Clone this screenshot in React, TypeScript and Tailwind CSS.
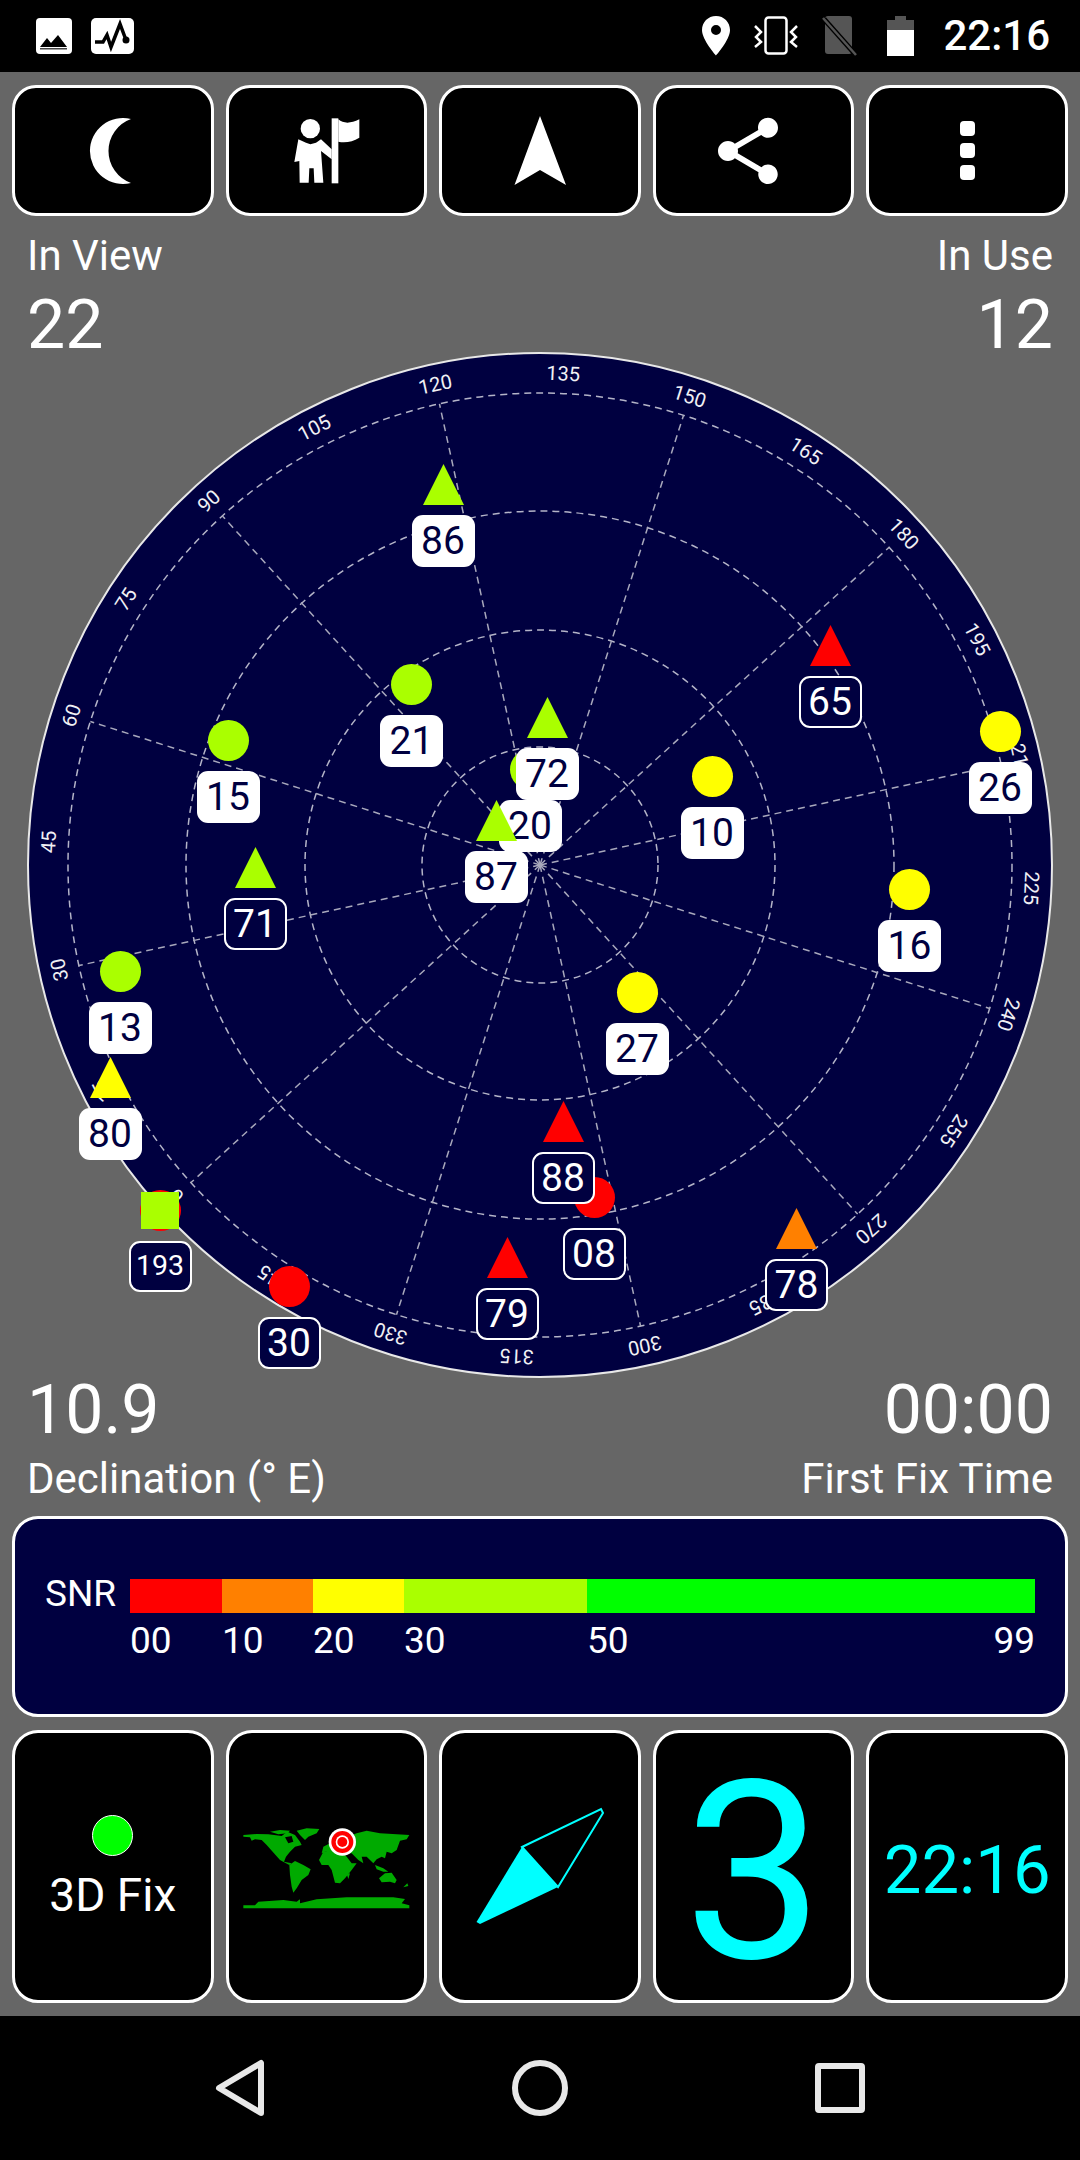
import { MdShare } from 'react-icons/md'

const RED = '#ff0000'
const ORANGE = '#ff8000'
const YELLOW = '#ffff00'
const LIME = '#aaff00'

type Sat = {
  id: string
  x: number
  y: number
  color: string
  shape: 'circle' | 'triangle' | 'square'
  inUse?: boolean
}

// x = marker centre, y = marker top, page coordinates
const sats: Sat[] = [
  { id: '86', x: 443, y: 464, color: LIME, shape: 'triangle', inUse: true },
  { id: '21', x: 411.5, y: 664, color: LIME, shape: 'circle', inUse: true },
  { id: '15', x: 228, y: 720, color: LIME, shape: 'circle', inUse: true },
  { id: '71', x: 255, y: 847, color: LIME, shape: 'triangle' },
  { id: '20', x: 530, y: 749, color: LIME, shape: 'circle', inUse: true },
  { id: '72', x: 547, y: 697, color: LIME, shape: 'triangle', inUse: true },
  { id: '87', x: 496, y: 800, color: LIME, shape: 'triangle', inUse: true },
  { id: '65', x: 830, y: 625, color: RED, shape: 'triangle' },
  { id: '26', x: 1000, y: 711, color: YELLOW, shape: 'circle', inUse: true },
  { id: '10', x: 712, y: 756, color: YELLOW, shape: 'circle', inUse: true },
  { id: '16', x: 909.5, y: 869, color: YELLOW, shape: 'circle', inUse: true },
  { id: '27', x: 637, y: 972, color: YELLOW, shape: 'circle', inUse: true },
  { id: '13', x: 120, y: 951, color: LIME, shape: 'circle', inUse: true },
  { id: '80', x: 110, y: 1057, color: YELLOW, shape: 'triangle', inUse: true },
  { id: '193', x: 160, y: 1190, color: RED, shape: 'square' },
  { id: '30', x: 289, y: 1266, color: RED, shape: 'circle' },
  { id: '79', x: 507, y: 1237, color: RED, shape: 'triangle' },
  { id: '08', x: 594, y: 1177, color: RED, shape: 'circle' },
  { id: '88', x: 563, y: 1101, color: RED, shape: 'triangle' },
  { id: '78', x: 796.5, y: 1208, color: ORANGE, shape: 'triangle' },
]

const DIAL_LEFT = 26
const DIAL_TOP = 351
const C = 514
const ROT = -132.3

function Marker({ sat }: { sat: Sat }) {
  if (sat.shape === 'triangle') {
    return (
      <svg width="41" height="41" viewBox="0 0 41 41">
        <polygon points="20.5,0 41,41 0,41" fill={sat.color} />
      </svg>
    )
  }
  if (sat.shape === 'square') {
    return (
      <div className="relative w-[41px] h-[41px] rounded-full bg-[#ff0000]">
        <div className="absolute left-[1.5px] top-[2px] w-[38px] h-[37px] bg-[#aaff00]" />
      </div>
    )
  }
  return <div className="w-[41px] h-[41px] rounded-full" style={{ background: sat.color }} />
}

function Satellite({ sat }: { sat: Sat }) {
  return (
    <div
      className="absolute w-[63px] flex flex-col items-center"
      style={{ left: sat.x - DIAL_LEFT - 31.5, top: sat.y - DIAL_TOP }}
    >
      <Marker sat={sat} />
      <div
        className={
          sat.inUse
            ? 'mt-[10px] w-[63px] h-[52px] pt-[1px] rounded-[11px] bg-white text-[#000040] flex items-center justify-center text-[39px] leading-none'
            : sat.id === '193'
              ? 'mt-[10px] w-[63px] h-[51px] rounded-[11px] border-2 border-white bg-[#000040] text-white flex items-center justify-center text-[28.5px] leading-none'
              : 'mt-[10px] w-[63px] h-[52px] pt-[1px] rounded-[11px] border-2 border-white bg-[#000040] text-white flex items-center justify-center text-[39px] leading-none'
        }
      >
        {sat.id}
      </div>
    </div>
  )
}

function Dial() {
  const spokes = Array.from({ length: 12 }, (_, i) => i * 30)
  const labels = Array.from({ length: 24 }, (_, i) => i * 15)
  return (
    <div className="relative w-[1028px] h-[1028px] mx-auto shrink-0">
      <svg width="1028" height="1028" viewBox="0 0 1028 1028" className="absolute inset-0">
        <circle cx={C} cy={C} r="512" fill="#000040" stroke="#e8e8e8" strokeWidth="2" />
        {[118, 235, 354, 472].map((r) => (
          <circle key={r} cx={C} cy={C} r={r} fill="none" stroke="#b4b4c8" strokeWidth="1.5" strokeDasharray="7 5" />
        ))}
        {spokes.map((az) => {
          const a = ((az + ROT) * Math.PI) / 180
          return (
            <line
              key={az}
              x1={C}
              y1={C}
              x2={C + 472 * Math.sin(a)}
              y2={C - 472 * Math.cos(a)}
              stroke="#a8a8bc"
              strokeWidth="1.5"
              strokeDasharray="7 5"
            />
          )
        })}
        {labels.map((az) => {
          const deg = az + ROT
          const a = (deg * Math.PI) / 180
          const x = C + 492 * Math.sin(a)
          const y = C - 492 * Math.cos(a)
          return (
            <text
              key={az}
              x={x}
              y={y}
              fill="#f0f0f4"
              fontSize="20"
              textAnchor="middle"
              dominantBaseline="central"
              transform={`rotate(${deg} ${x} ${y})`}
            >
              {az}
            </text>
          )
        })}
      </svg>
      {sats.map((s) => (
        <Satellite key={s.id} sat={s} />
      ))}
    </div>
  )
}

function Tile({ children }: { children?: React.ReactNode }) {
  return (
    <div className="flex h-[131px] items-center justify-center rounded-[24px] border-[3px] border-white bg-black">
      {children}
    </div>
  )
}

function BigTile({ children }: { children?: React.ReactNode }) {
  return (
    <div className="relative flex h-[273px] items-center justify-center overflow-hidden rounded-[26px] border-[3px] border-white bg-black">
      {children}
    </div>
  )
}

function StatusBar() {
  return (
    <div className="flex h-[72px] shrink-0 items-center bg-black pl-[36px] pr-[30px]">
      <svg width="36" height="36" viewBox="0 0 36 36">
        <rect width="36" height="36" rx="4" fill="#fff" />
        <polygon points="4,29 11,20 15,25 22,17 31,29" fill="#000" />
        <rect x="4" y="30" width="27" height="1.5" fill="#444" />
      </svg>
      <svg width="43" height="36" viewBox="0 0 43 36" className="ml-[19px]">
        <rect width="43" height="36" rx="5" fill="#fff" />
        <polyline points="4,24 12,24 16,17 20,29 29,6 35,22" fill="none" stroke="#000" strokeWidth="3.5" />
        <circle cx="35" cy="22" r="3.5" fill="#000" />
      </svg>
      <svg width="28" height="40" viewBox="0 0 28 40" className="ml-auto">
        <path
          fillRule="evenodd"
          d="M14 0C6 0 0 6.3 0 14c0 10 14 25.500 14 25.500S28 24 28 14C28 6.300 22 0 14 0zm0 9a5 5 0 1 1 0 10 5 5 0 0 1 0-10z"
          fill="#fff"
        />
      </svg>
      <svg width="46" height="40" viewBox="0 0 46 40" className="ml-[23px]">
        <rect x="12.500" y="1.500" width="21" height="36" rx="3" fill="none" stroke="#fff" strokeWidth="2.500" />
        <polyline points="2,10 8,16 3,21 8,26 2,31" fill="none" stroke="#fff" strokeWidth="2.500" />
        <polyline points="44,10 38,16 43,21 38,26 44,31" fill="none" stroke="#fff" strokeWidth="2.500" />
      </svg>
      <svg width="36" height="42" viewBox="0 0 36 42" className="ml-[23px]">
        <path d="M6 1h21a3 3 0 0 1 3 3v32a3 3 0 0 1-3 3H6a3 3 0 0 1-3-3V4a3 3 0 0 1 3-3z" fill="#555" />
        <line x1="2" y1="4" x2="33" y2="39" stroke="#000" strokeWidth="5" />
        <line x1="1" y1="3" x2="34" y2="40" stroke="#555" strokeWidth="2.500" />
      </svg>
      <svg width="27" height="40" viewBox="0 0 27 40" className="ml-[29px]">
        <rect x="8" y="0" width="11" height="5" fill="#555" />
        <rect x="0" y="4" width="27" height="10" fill="#555" />
        <rect x="0" y="14" width="27" height="26" fill="#fff" />
      </svg>
      <span className="ml-[29px] text-[42px] font-medium leading-none text-white">22:16</span>
    </div>
  )
}

function TopButtons() {
  return (
    <div className="grid grid-cols-5 gap-[12px]">
      <Tile>
        <svg width="100" height="100" viewBox="0 0 100 100" className="ml-[2px]">
          <path d="M67 18A33 33 0 1 0 67 82A34 34 0 0 1 67 18Z" fill="#fff" />
        </svg>
      </Tile>
      <Tile>
        <svg width="110" height="100" viewBox="0 0 330 300">
          <circle cx="118" cy="83" r="29" fill="#fff" />
          <polygon
            points="82,115 105,125 118,130 135,125 150,115 182,145 182,175 150,150 157,245 130,245 128,202 115,202 113,245 86,245 85,180 70,183"
            fill="#fff"
          />
          <rect x="182" y="52" width="20" height="195" fill="#fff" />
          <path d="M202 55Q225 75 265 55V110Q235 128 202 122Z" fill="#fff" />
        </svg>
      </Tile>
      <Tile>
        <svg width="100" height="100" viewBox="0 0 100 100">
          <polygon points="50,15 76,84 50,69 24.500,84" fill="#fff" />
        </svg>
      </Tile>
      <Tile>
        <MdShare size={80} color="#fff" className="mr-[11px]" />
      </Tile>
      <Tile>
        <div className="flex flex-col gap-[7px]">
          <div className="h-[15px] w-[15px] rounded-[4px] bg-white" />
          <div className="h-[15px] w-[15px] rounded-[4px] bg-white" />
          <div className="h-[15px] w-[15px] rounded-[4px] bg-white" />
        </div>
      </Tile>
    </div>
  )
}

function SnrPanel() {
  return (
    <div className="mt-[16px] flex h-[201px] flex-col justify-center rounded-[26px] border-[3px] border-white bg-[#000040] pt-[4px] text-white">
      <div className="flex items-center">
        <div className="mt-[-5px] w-[115px] pl-[30px] text-[37px] leading-none">SNR</div>
        <div className="flex h-[34px]">
          <div className="w-[92px] bg-[#ff0000]" />
          <div className="w-[91px] bg-[#ff8000]" />
          <div className="w-[91px] bg-[#ffff00]" />
          <div className="w-[183px] bg-[#aaff00]" />
          <div className="w-[448px] bg-[#00ff00]" />
        </div>
      </div>
      <div className="mt-[9px] flex pl-[115px] text-[37px] leading-none">
        <div className="w-[92px]">00</div>
        <div className="w-[91px]">10</div>
        <div className="w-[91px]">20</div>
        <div className="w-[183px]">30</div>
        <div className="flex w-[448px] justify-between">
          <span>50</span>
          <span>99</span>
        </div>
      </div>
    </div>
  )
}

function WorldMap() {
  return (
    <svg width="240" height="140" viewBox="0 0 720 420" className="absolute left-[-29px] top-[67px]">
      <g fill="#00aa00">
        <polygon points="130,105 170,102 205,103 245,108 262,95 285,105 300,125 305,135 285,140 270,155 258,170 252,185 275,190 268,195 255,188 240,180 222,160 200,135 185,120 165,118 155,122 150,112 130,110" />
        <polygon points="290,92 320,85 358,87 350,100 325,110 315,120 300,105" />
        <polygon points="210,95 240,90 270,92 262,100 235,103" />
        <polygon points="268,195 285,183 310,195 332,208 325,225 305,240 290,265 280,278 275,260 270,225" />
        <polygon points="357,180 370,155 400,150 430,160 440,170 455,190 470,190 455,210 435,235 420,250 405,248 395,210 385,195 365,195" />
        <polygon points="390,130 470,100 500,92 540,100 628,105 620,118 600,122 590,150 575,160 560,155 555,175 545,170 530,178 520,190 500,170 485,170 490,190 475,180 455,160 430,160 415,150 375,155 365,160 370,140" />
        <polygon points="525,195 550,205 565,215 550,215 530,208" />
        <polygon points="537,235 555,220 575,218 590,240 585,250 570,245 545,247" />
        <polygon points="610,262 622,250 625,258" />
        <polygon points="440,222 450,220 445,237" />
        <polygon points="130,316 165,316 175,305 250,300 290,305 300,298 300,310 350,298 440,292 500,292 580,292 615,297 605,310 628,316 628,325 130,325" />
      </g>
      <polygon points="255,112 275,108 280,125 265,130" fill="#000" />
      <circle cx="427" cy="126" r="41" fill="#fff" />
      <circle cx="427" cy="126" r="33" fill="#ff0000" />
      <circle cx="427" cy="126" r="20" fill="#fff" />
      <circle cx="427" cy="126" r="15" fill="#ff0000" />
    </svg>
  )
}

function BottomTiles() {
  return (
    <div className="mt-[13px] grid grid-cols-5 gap-[12px]">
      <BigTile>
        <div className="flex flex-col items-center">
          <div className="h-[41px] w-[41px] rounded-full border border-white bg-[#00ff00]" />
          <div className="mt-[16px] text-[46px] leading-none text-white">3D Fix</div>
        </div>
      </BigTile>
      <BigTile>
        <WorldMap />
      </BigTile>
      <BigTile>
        <svg width="200" height="273" viewBox="440 1730 200 273" className="absolute left-[-2px] top-[-3px]">
          <polygon points="522,1847 558,1887 480,1924 476.500,1922" fill="#00ffff" />
          <polygon points="522,1847 601,1809 603,1813 558,1887" fill="none" stroke="#00ffff" strokeWidth="2" />
        </svg>
      </BigTile>
      <BigTile>
        <span className="pt-[14px] text-[248px] leading-none text-[#00ffff]">3</span>
      </BigTile>
      <BigTile>
        <span className="pt-[8px] text-[67px] leading-none text-[#00ffff]">22:16</span>
      </BigTile>
    </div>
  )
}

function NavBar() {
  return (
    <div className="flex h-[144px] shrink-0 items-center bg-black">
      <svg width="1080" height="144" viewBox="0 2016 1080 144">
        <path d="M261 2063V2113L219 2088Z" fill="none" stroke="#e8e8e8" strokeWidth="6" strokeLinejoin="round" />
        <circle cx="540" cy="2088" r="25" fill="none" stroke="#e8e8e8" strokeWidth="6" />
        <rect x="818" y="2066" width="44" height="44" rx="1" fill="none" stroke="#e8e8e8" strokeWidth="6" />
      </svg>
    </div>
  )
}

export default function App() {
  return (
    <div className="flex h-[2160px] w-[1080px] flex-col overflow-hidden bg-black font-['Roboto',sans-serif]">
      <StatusBar />
      <div className="h-[1944px] shrink-0 bg-[#666666] px-[12px] pt-[13px] text-white">
        <TopButtons />
        <div className="mt-[19px] flex justify-between px-[15px] text-[42px] leading-none">
          <span>In View</span>
          <span>In Use</span>
        </div>
        <div className="mt-[14px] flex h-[60px] justify-between px-[15px] text-[68px] leading-none">
          <span>22</span>
          <span>12</span>
        </div>
        <Dial />
        <div className="mt-[-3px] flex justify-between px-[15px] text-[68px] leading-none">
          <span>10.9</span>
          <span>00:00</span>
        </div>
        <div className="mt-[14px] flex justify-between px-[15px] text-[42px] leading-none">
          <span>Declination (° E)</span>
          <span>First Fix Time</span>
        </div>
        <SnrPanel />
        <BottomTiles />
      </div>
      <NavBar />
    </div>
  )
}
